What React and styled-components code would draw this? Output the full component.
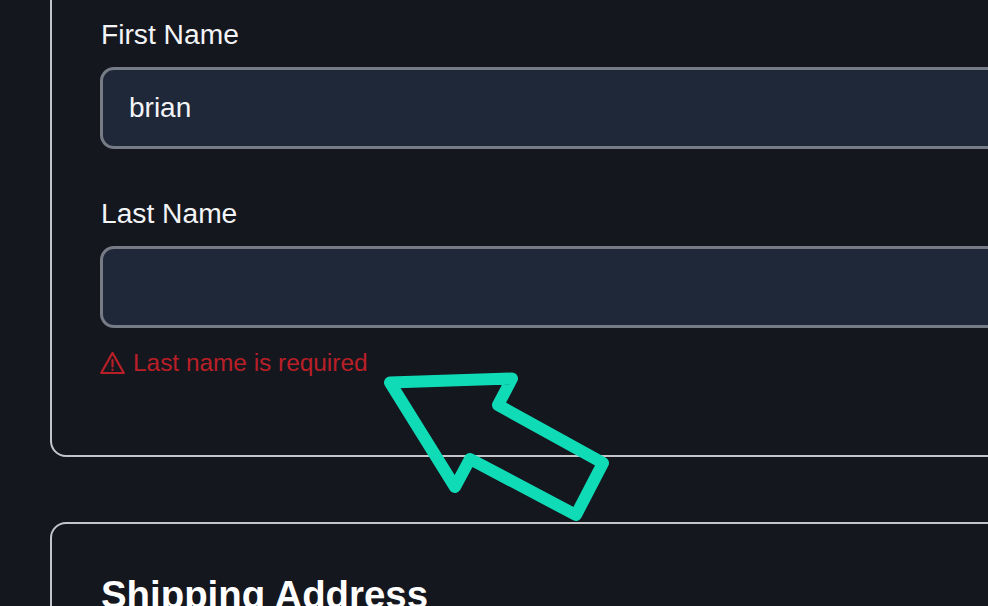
import React from 'react'
import styled, { createGlobalStyle } from 'styled-components'

const GlobalStyle = createGlobalStyle`
  html, body {
    margin: 0;
    padding: 0;
    background: #15171f;
    overflow: hidden;
  }
  body {
    font-family: "Liberation Sans", Arial, sans-serif;
  }
`
const Page = styled.div`
  position: relative;
  box-sizing: border-box;
  width: 988px;
  height: 606px;
  padding-left: 50px;
  overflow: hidden;
  background: #15171f;
`
const Card = styled.section`
  box-sizing: border-box;
  width: 1200px;
  margin-top: ${props => props.top || 0}px;
  padding: ${props => props.pad || 0}px 48px 77px;
  border: 2px solid #c4c5c9;
  border-radius: 16px;
`
const Field = styled.div`
  margin-bottom: 47px;
  &:last-of-type {
    margin-bottom: 0;
  }
`
const Label = styled.label`
  display: block;
  margin-bottom: 16px;
  padding-left: 1px;
  font-size: 28.2px;
  line-height: 34px;
  color: #f3f4f6;
`
const Input = styled.input`
  display: block;
  box-sizing: border-box;
  width: 100%;
  height: 82px;
  padding: 0 26px;
  border: 3px solid #777b86;
  border-radius: 14px;
  outline: none;
  background: #1f2839;
  font-family: inherit;
  font-size: 28px;
  color: #f3f4f6;
`
const ErrorRow = styled.div`
  display: flex;
  align-items: center;
  gap: 8px;
  margin-top: 20px;
  font-size: 24.4px;
  line-height: 30px;
  color: #b91f27;
`
const Heading = styled.h2`
  margin: 0;
  padding-left: 1px;
  font-size: 38.4px;
  line-height: 48px;
  font-weight: 700;
  color: #ffffff;
`
const Arrow = styled.svg`
  position: absolute;
  left: 0;
  top: 0;
  pointer-events: none;
`

function WarningIcon () {
  return (
    <svg width="25" height="24" viewBox="0 0 25 24" fill="none" stroke="currentColor" strokeWidth="2.2" strokeLinejoin="round" strokeLinecap="round">
      <path d="M12.5 2 L23.8 22 H1.2 Z" />
      <path d="M12.5 9 V15.5" />
      <path d="M12.5 18.7 V19" />
    </svg>
  )
}

function App () {
  return (
    <Page>
      <GlobalStyle />
      <Card top={-60} pad={75}>
        <Field>
          <Label>First Name</Label>
          <Input defaultValue="brian" />
        </Field>
        <Field>
          <Label>Last Name</Label>
          <Input />
          <ErrorRow>
            <WarningIcon />
            Last name is required
          </ErrorRow>
        </Field>
      </Card>
      <Card top={65} pad={47}>
        <Heading>Shipping Address</Heading>
      </Card>
      <Arrow width="988" height="606" viewBox="0 0 988 606">
        <path
          d="M390 382.5 L512 378.5 L498 405 L603 463 L576 515 L470 459 L455 487 Z"
          fill="none"
          stroke="#0fdcb6"
          strokeWidth="12"
          strokeLinejoin="round"
        />
      </Arrow>
    </Page>
  )
}

export default App
